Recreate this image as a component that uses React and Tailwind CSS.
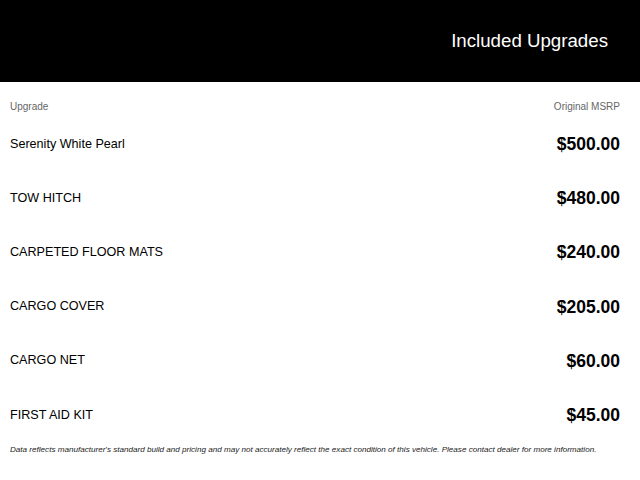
export default function App() {
  const rows = [
    ['Serenity White Pearl', '$500.00'],
    ['TOW HITCH', '$480.00'],
    ['CARPETED FLOOR MATS', '$240.00'],
    ['CARGO COVER', '$205.00'],
    ['CARGO NET', '$60.00'],
    ['FIRST AID KIT', '$45.00'],
  ];

  return (
    <div className="w-[640px] h-[480px] bg-white font-['Liberation_Sans',Arial,sans-serif]">
      <div className="h-[82px] bg-black flex items-center justify-end pr-[32px]">
        <h1 className="text-[18.7px] text-white">Included Upgrades</h1>
      </div>
      <div className="pl-[10px] pr-[20px]">
        <div className="flex justify-between items-center h-[20px] mt-[14px] text-[10px] text-[#666]">
          <span>Upgrade</span>
          <span>Original MSRP</span>
        </div>
        <div className="pt-[1px]">
          {rows.map(([name, price]) => (
            <div key={name} className="flex justify-between items-center h-[54.2px]">
              <span className="text-[12.6px] text-black">{name}</span>
              <span className="text-[17.5px] font-bold text-black">{price}</span>
            </div>
          ))}
        </div>
        <p className="text-[8.1px] leading-[12px] italic text-[#222] mt-[2px] whitespace-nowrap">
          Data reflects manufacturer's standard build and pricing and may not accurately reflect the exact condition of this vehicle. Please contact dealer for more information.
        </p>
      </div>
    </div>
  );
}
